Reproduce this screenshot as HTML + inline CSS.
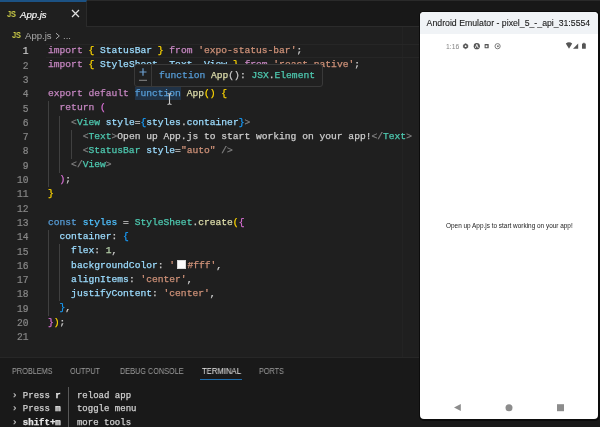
<!DOCTYPE html>
<html><head><meta charset="utf-8">
<style>
*{margin:0;padding:0;box-sizing:border-box}
html,body{width:600px;height:427px;overflow:hidden;background:#1f1f1f}
body{position:relative;font-family:"Liberation Sans",sans-serif}
.abs,.ln,.cl,.term,.ptab{will-change:transform}
.abs{position:absolute}
#tabbar{left:0;top:0;width:600px;height:27px;background:#181818;border-bottom:1px solid #2b2b2b}
#tab{left:0;top:0;width:87px;height:27px;background:#1f1f1f;border-top:2px solid #1c5284;border-right:1px solid #2b2b2b}
.js{color:#cdcd48;font-weight:bold;font-size:8.4px;letter-spacing:-0.2px;transform:scaleX(0.88);transform-origin:0 0}
#code{left:0;top:44px;width:420px}
.ln{position:absolute;-webkit-text-stroke:0.2px currentColor;left:0;margin-top:1.4px;width:28.5px;transform:scaleY(1.16);transform-origin:50% 50%;text-align:right;font-family:"Liberation Mono",monospace;font-size:9.63px;line-height:14.3px;color:#878787}
.cl{position:absolute;left:48px;-webkit-text-stroke:0.25px currentColor;white-space:pre;font-family:"Liberation Mono",monospace;font-size:9.63px;line-height:14.3px;color:#cccccc}
.k{color:#c586c0}.b1{color:#ffd700}.b2{color:#da70d6}.b3{color:#179fff}
.v{color:#9cdcfe}.s{color:#ce9178}.f{color:#569cd6}.fn{color:#dcdcaa}
.g{color:#808080}.t{color:#4ec9b0}.c{color:#4fc1ff}.n{color:#b5cea8}
.guide{position:absolute;width:1px;background:#404040}
#panel{left:0;top:357px;width:600px;height:70px;background:#191919;border-top:1px solid #272727}
.ptab{position:absolute;top:366px;font-size:8.4px;color:#9d9d9d;white-space:nowrap;transform:scaleX(0.87);transform-origin:0 0}
.term{position:absolute;left:11.5px;white-space:pre;font-family:"Liberation Mono",monospace;font-size:9.03px;line-height:13.2px;color:#d0d0d0;-webkit-text-stroke:0.25px currentColor}
.term b{color:#e5e5e5}.term .g{color:#c0c0c0}
#emu{left:420px;top:12px;width:178px;height:406.5px;background:#fff;border-radius:4px;overflow:hidden}
#emutitle{left:0;top:0;width:178px;height:21.6px;background:#f0f3f6;color:#1a1a1a;-webkit-text-stroke:0.1px #1a1a1a;font-size:8.74px;line-height:23px;padding-left:6.6px;white-space:nowrap}
</style></head><body>
<div id="tabbar" class="abs"></div>
<div id="tab" class="abs">
  <span class="abs js" style="left:7px;top:7.3px">JS</span>
  <span class="abs" style="left:20px;top:6.5px;font-size:9.6px;font-style:italic;color:#ffffff;-webkit-text-stroke:0.15px #fff">App.js</span>
  <svg class="abs" style="left:71px;top:7px" width="9" height="9" viewBox="0 0 9 9"><path d="M1 1L8 8M8 1L1 8" stroke="#e0e0e0" stroke-width="1.25"/></svg>
</div>
<!-- breadcrumb -->
<span class="abs js" style="left:11.5px;top:30.4px">JS</span>
<span class="abs" style="left:25px;top:29.8px;font-size:9.6px;color:#a9a9a9">App.js</span>
<svg class="abs" style="left:55px;top:32px" width="6" height="8" viewBox="0 0 6 8"><path d="M1 1.2L4.3 4L1 6.8" stroke="#a9a9a9" stroke-width="1" fill="none"/></svg>
<span class="abs" style="left:63px;top:30px;font-size:9.6px;color:#a9a9a9">...</span>

<div class="abs" style="left:402px;top:27px;width:1px;height:330px;background:#232323"></div>
<!-- current line border -->
<div class="abs" style="left:46px;top:43.6px;width:374px;height:14.3px;border-top:1px solid #262626;border-bottom:1px solid #262626"></div>

<div id="code" class="abs">
<div class="ln" style="top:0px;color:#cccccc">1</div>
<div class="ln" style="top:14.3px">2</div>
<div class="ln" style="top:28.6px">3</div>
<div class="ln" style="top:42.9px">4</div>
<div class="ln" style="top:57.2px">5</div>
<div class="ln" style="top:71.5px">6</div>
<div class="ln" style="top:85.8px">7</div>
<div class="ln" style="top:100.1px">8</div>
<div class="ln" style="top:114.4px">9</div>
<div class="ln" style="top:128.7px">10</div>
<div class="ln" style="top:143px">11</div>
<div class="ln" style="top:157.3px">12</div>
<div class="ln" style="top:171.6px">13</div>
<div class="ln" style="top:185.9px">14</div>
<div class="ln" style="top:200.2px">15</div>
<div class="ln" style="top:214.5px">16</div>
<div class="ln" style="top:228.8px">17</div>
<div class="ln" style="top:243.1px">18</div>
<div class="ln" style="top:257.4px">19</div>
<div class="ln" style="top:271.7px">20</div>
<div class="ln" style="top:286px">21</div>

<div class="guide" style="left:48px;top:57.2px;height:85.8px"></div>
<div class="guide" style="left:59px;top:71.5px;height:57.2px"></div>
<div class="guide" style="left:70.6px;top:85.8px;height:29.5px"></div>
<div class="guide" style="left:48px;top:185.9px;height:85.8px"></div>
<div class="guide" style="left:59px;top:200.2px;height:57.2px"></div>

<div class="cl" style="top:0px"><span class="k">import</span> <span class="b1">{</span> <span class="v">StatusBar</span> <span class="b1">}</span> <span class="k">from</span> <span class="s">'expo-status-bar'</span>;</div>
<div class="cl" style="top:14.3px"><span class="k">import</span> <span class="b1">{</span> <span class="v">StyleSheet</span>, <span class="v">Text</span>, <span class="v">View</span> <span class="b1">}</span> <span class="k">from</span> <span class="s">'react-native'</span>;</div>
<div class="cl" style="top:42.9px"><span class="k">export</span> <span class="k">default</span> <span class="f" style="background:#203246;display:inline-block;height:13px;line-height:14.3px;vertical-align:top;margin-top:0">function</span> <span class="fn">App</span><span class="b1">()</span> <span class="b1">{</span></div>
<div class="cl" style="top:57.2px">  <span class="k">return</span> <span class="b2">(</span></div>
<div class="cl" style="top:71.5px">    <span class="g">&lt;</span><span class="t">View</span> <span class="v">style</span>=<span class="b3">{</span><span class="v">styles</span>.<span class="v">container</span><span class="b3">}</span><span class="g">&gt;</span></div>
<div class="cl" style="top:85.8px">      <span class="g">&lt;</span><span class="t">Text</span><span class="g">&gt;</span>Open up App.js to start working on your app!<span class="g">&lt;/</span><span class="t">Text</span><span class="g">&gt;</span></div>
<div class="cl" style="top:100.1px">      <span class="g">&lt;</span><span class="t">StatusBar</span> <span class="v">style</span>=<span class="s">"auto"</span> <span class="g">/&gt;</span></div>
<div class="cl" style="top:114.4px">    <span class="g">&lt;/</span><span class="t">View</span><span class="g">&gt;</span></div>
<div class="cl" style="top:128.7px">  <span class="b2">)</span>;</div>
<div class="cl" style="top:143px"><span class="b1">}</span></div>
<div class="cl" style="top:171.6px"><span class="f">const</span> <span class="c">styles</span> = <span class="t">StyleSheet</span>.<span class="fn">create</span><span class="b1">(</span><span class="b2">{</span></div>
<div class="cl" style="top:185.9px">  <span class="v">container</span>: <span class="b3">{</span></div>
<div class="cl" style="top:200.2px">    <span class="v">flex</span>: <span class="n">1</span>,</div>
<div class="cl" style="top:214.5px">    <span class="v">backgroundColor</span>: <span class="s">'<span style="display:inline-block;width:9px;height:9px;background:#fafafa;border:1px solid #d8d8d8;margin:0 1.6px 0 1.7px;vertical-align:-0.5px;-webkit-text-stroke:0"></span>#fff'</span>,</div>
<div class="cl" style="top:228.8px">    <span class="v">alignItems</span>: <span class="s">'center'</span>,</div>
<div class="cl" style="top:243.1px">    <span class="v">justifyContent</span>: <span class="s">'center'</span>,</div>
<div class="cl" style="top:257.4px">  <span class="b3">}</span>,</div>
<div class="cl" style="top:271.7px"><span class="b2">}</span><span class="b1">)</span>;</div>
</div>

<!-- hover popup -->
<div class="abs" style="left:134px;top:64px;width:189px;height:23px;background:#202020;border:1px solid #393939;border-radius:3px">
  <div class="abs" style="left:15.6px;top:0;width:1px;height:21px;background:#393939"></div>
  <svg class="abs" style="left:0;top:0" width="17" height="21" viewBox="0 0 17 21"><path d="M8 3.2V10.8M4.5 7H11.5" stroke="#6d9fcf" stroke-width="1.2"/><path d="M4 15.3H12" stroke="#8a8a8a" stroke-width="1"/></svg>
  <div class="abs" style="left:23.7px;top:3.6px;white-space:pre;font-family:'Liberation Mono',monospace;font-size:9.63px;line-height:14.3px;color:#cccccc;-webkit-text-stroke:0.25px currentColor"><span class="f">function</span> <span class="fn">App</span>(): <span class="t">JSX</span>.<span class="t">Element</span></div>
</div>
<!-- I-beam cursor -->
<svg class="abs" style="left:164.5px;top:91.5px" width="9" height="14" viewBox="0 0 9 14"><path d="M2.5 1.5Q4.5 1.5 4.5 3V11Q4.5 12.5 2.5 12.5M6.5 1.5Q4.5 1.5 4.5 3V11Q4.5 12.5 6.5 12.5" stroke="#c8c8c8" stroke-width="1.1" fill="none"/></svg>

<!-- panel -->
<div id="panel" class="abs"></div>
<span class="ptab" style="left:11.5px">PROBLEMS</span>
<span class="ptab" style="left:70px">OUTPUT</span>
<span class="ptab" style="left:119.5px">DEBUG CONSOLE</span>
<span class="ptab" style="left:201.5px;color:#e7e7e7;transform:scaleX(0.92)">TERMINAL</span>
<div class="abs" style="left:200px;top:379px;width:42px;height:1px;background:#1f6eae"></div>
<span class="ptab" style="left:258.5px">PORTS</span>

<div class="term" style="top:389.1px"><span class="g">›</span> Press <b>r</b>   reload app</div>
<div class="term" style="top:402.3px"><span class="g">›</span> Press <b>m</b>   toggle menu</div>
<div class="term" style="top:415.5px"><span class="g">›</span> <b>shift+m</b>   more tools</div>
<div class="abs" style="left:68px;top:387px;width:1px;height:40px;background:#585858"></div>

<!-- emulator -->
<div class="abs" style="left:419px;top:11px;width:181px;height:410px;background:#0c0c0c;border-radius:5px"></div>
<div class="abs" style="left:87px;top:0;width:513px;height:1px;background:#2a2a2a"></div>
<div id="emu" class="abs">
  <div id="emutitle" class="abs">Android Emulator - pixel_5_-_api_31:5554</div>
  <span class="abs" style="left:26.3px;top:31.3px;font-size:6.8px;color:#858585;letter-spacing:0px">1:16</span>
  <svg class="abs" style="left:0;top:26px" width="178" height="16" viewBox="0 0 178 16">
    <g fill="#555">
      <circle cx="45.6" cy="8.2" r="2"/>
      <circle cx="56.8" cy="8.2" r="3.1"/>
      <rect x="64.6" y="6.1" width="4.1" height="4.1" rx="0.5"/>
    </g>
    <path d="M45.60 5.60 L47.85 6.90 L47.85 9.50 L45.60 10.80 L43.35 9.50 L43.35 6.90Z" fill="#555" stroke="#555" stroke-width="0.5" stroke-linejoin="round"/>
    <circle cx="45.6" cy="8.2" r="0.9" fill="#fff"/>
    <path d="M55.4 9.9L56.8 6.4L58.2 9.9" stroke="#fff" stroke-width="0.9" fill="none"/>
    <rect x="65.6" y="7.4" width="1.8" height="1.8" fill="#fff"/>
    <circle cx="77.6" cy="8.2" r="2.6" fill="none" stroke="#7a7a7a" stroke-width="1"/>
    <circle cx="77.9" cy="8.2" r="1" fill="#7a7a7a"/>
    <g fill="#555">
      <path d="M145.8 5.4Q149 3.2 152.2 5.4L149 10.8Z"/>
      <path d="M153 10.8L158.2 5.6V10.8Z"/>
      <rect x="162" y="5.4" width="3.8" height="5.4" rx="0.5"/>
      <rect x="163.1" y="4.8" width="1.6" height="1"/>
    </g>
  </svg>
  <span class="abs" style="left:25.8px;top:210.1px;font-size:6.43px;color:#222;white-space:nowrap">Open up App.js to start working on your app!</span>
  <svg class="abs" style="left:0;top:380px" width="178" height="26" viewBox="0 0 178 26">
    <path d="M34 15.5L40.8 12V19Z" fill="#8c8c8c"/>
    <circle cx="89" cy="15.7" r="3.5" fill="#8c8c8c"/>
    <rect x="137" y="12.2" width="7" height="7" fill="#8c8c8c"/>
  </svg>
</div>
</body></html>
